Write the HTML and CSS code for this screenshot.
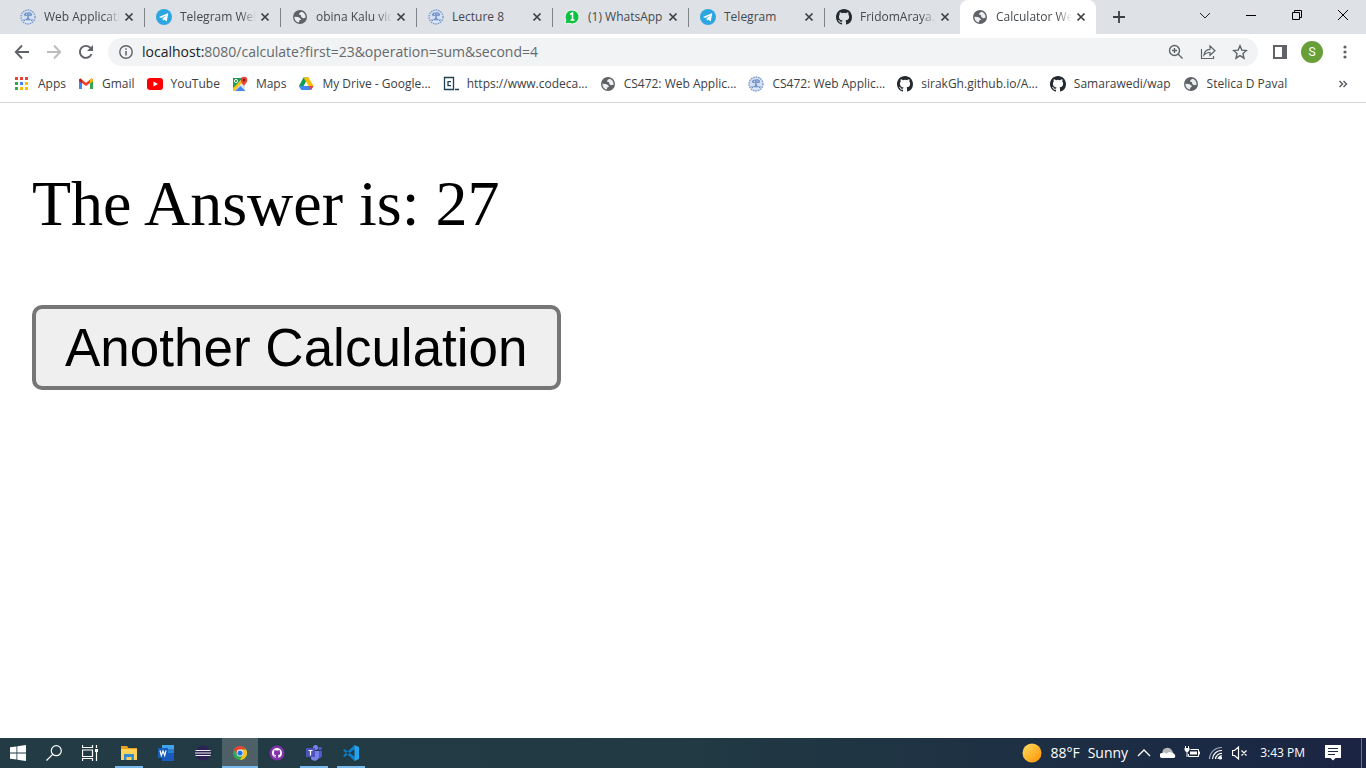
FILE: index.html
```html
<!DOCTYPE html>
<html lang="en">
<head>
<meta charset="utf-8">
<title>Calculator Web</title>
<link rel="stylesheet" href="styles.css">
</head>
<body>
<svg class="defs" aria-hidden="true">
  <symbol id="globe" viewBox="0 0 16 16"><circle cx="8" cy="8" r="7" fill="#5f6368"/><path d="M9.500 2.800L7.500 4 7 5.500l2 .8.3 1.700 1.700 1.200 2.600-.4C13.700 5.500 12 3.500 9.500 2.800zM2.400 7.800l3.600.2 2.200 1.200.8 1.600-1.700.8-.5 2C4.300 13.200 2.300 10.800 2.400 7.800z" fill="#eceef0"/></symbol>
  <symbol id="seal" viewBox="0 0 16 16"><circle cx="8" cy="8" r="7.300" fill="#d3dff0"/><circle cx="8" cy="8" r="7" fill="none" stroke="#7897c8" stroke-width="1.300" stroke-dasharray="1.500 1"/><path d="M4 6.500C3.500 4 6 3 8 3.500c2-.7 4.500.5 4 3l-2 .8-1.300-.8.3 3 2 .8-1 .9H6l-1-.9 2-.8.300-3-1.300.8z" fill="#7595c9"/><path d="M6 5l1 .8M9 4.500l1 1M5 12.500h1.500m1 .7h1m1-.7H11M2.800 8.500l1 1m8.600-1l1 1" stroke="#f1f5fa" stroke-width=".9"/><path d="M3.500 10.500l1.500 1.300m6 0l1.500-1.300" stroke="#6687bd" stroke-width="1.100"/></symbol>
  <symbol id="telegram" viewBox="0 0 16 16"><circle cx="8" cy="8" r="8" fill="#2ca5e0"/><path d="M3 8l9.300-4-1.600 8.500-2.500-1.900-1.200 1.200-.4-2.200 3.800-3.500-5 3z" fill="#fff"/></symbol>
  <symbol id="github" viewBox="0 0 16 16"><path fill="currentColor" d="M8 0C3.580 0 0 3.580 0 8c0 3.540 2.290 6.530 5.470 7.590.4.070.55-.17.55-.38v-1.490c-2.010.37-2.530-.49-2.690-.94-.09-.23-.48-.94-.82-1.130-.28-.15-.68-.52-.01-.53.63-.01 1.080.58 1.230.82.72 1.210 1.870.87 2.330.66.070-.52.280-.87.510-1.070-1.780-.2-3.640-.89-3.640-3.950 0-.87.310-1.590.82-2.150-.08-.2-.36-1.020.08-2.120 0 0 .67-.21 2.200.82a7.600 7.600 0 0 1 4 0c1.530-1.040 2.200-.82 2.200-.82.44 1.100.16 1.920.08 2.120.51.560.82 1.270.82 2.150 0 3.070-1.870 3.750-3.650 3.950.29.250.54.730.54 1.480v2.200c0 .21.150.46.550.38A8 8 0 0 0 16 8c0-4.420-3.580-8-8-8z"/></symbol>
  <symbol id="close" viewBox="0 0 10 10"><path d="M1.500 1.500l7 7m0-7l-7 7" stroke="#3c4043" stroke-width="1.700"/></symbol>
</svg>
<div class="window">
  <header class="browser">
    <div class="tabstrip">
      <div class="tabs">
        <div class="tab"><svg class="icon"><use href="#seal"/></svg><span class="tab-title fade">Web Application</span><button class="tab-close" aria-label="Close tab"><svg><use href="#close"/></svg></button></div>
        <div class="tab"><svg class="icon"><use href="#telegram"/></svg><span class="tab-title fade">Telegram Web</span><button class="tab-close" aria-label="Close tab"><svg><use href="#close"/></svg></button></div>
        <div class="tab"><svg class="icon"><use href="#globe"/></svg><span class="tab-title fade">obina Kalu video</span><button class="tab-close" aria-label="Close tab"><svg><use href="#close"/></svg></button></div>
        <div class="tab"><svg class="icon"><use href="#seal"/></svg><span class="tab-title">Lecture 8</span><button class="tab-close" aria-label="Close tab"><svg><use href="#close"/></svg></button></div>
        <div class="tab"><svg class="icon" viewBox="0 0 16 16"><path d="M8 1a7 7 0 1 1-3 13.300L1 15l.9-3.700A7 7 0 0 1 8 1z" fill="#0dc143" stroke="#f2fbf4"/><path d="M6.200 5.500L8.500 4v7M6.500 11h4" fill="none" stroke="#fff" stroke-width="1.500"/></svg><span class="tab-title">(1) WhatsApp</span><button class="tab-close" aria-label="Close tab"><svg><use href="#close"/></svg></button></div>
        <div class="tab"><svg class="icon"><use href="#telegram"/></svg><span class="tab-title">Telegram</span><button class="tab-close" aria-label="Close tab"><svg><use href="#close"/></svg></button></div>
        <div class="tab last"><svg class="icon"><use href="#github"/></svg><span class="tab-title fade">FridomAraya.github</span><button class="tab-close" aria-label="Close tab"><svg><use href="#close"/></svg></button></div>
        <div class="tab active"><svg class="icon"><use href="#globe"/></svg><span class="tab-title fade">Calculator Web</span><button class="tab-close" aria-label="Close tab"><svg><use href="#close"/></svg></button></div>
      </div>
      <button class="new-tab" aria-label="New tab"><svg viewBox="0 0 12 12"><path d="M6 0v12M0 6h12" stroke="#3c4043" stroke-width="1.800"/></svg></button>
      <div class="caption">
        <button aria-label="Search tabs"><svg viewBox="0 0 12 12"><path d="M1 4l5 5 5-5" fill="none" stroke="#222"/></svg></button>
        <button aria-label="Minimize"><svg viewBox="0 0 12 12"><path d="M1 6.500h10" stroke="#000"/></svg></button>
        <button aria-label="Restore"><svg viewBox="0 0 12 12"><path d="M1.500 3.500h7v7h-7zM3.500 3.500v-2h7v7h-2" fill="none" stroke="#000"/></svg></button>
        <button aria-label="Close"><svg viewBox="0 0 12 12"><path d="M1 1l10 10m0-10L1 11" stroke="#000"/></svg></button>
      </div>
    </div>
    <div class="toolbar">
      <button class="nav" aria-label="Back"><svg viewBox="0 0 16 16"><path d="M15 8H2m6-6.500L1.800 8 8 14.500" fill="none" stroke="#5f6368" stroke-width="1.900"/></svg></button>
      <button class="nav" aria-label="Forward"><svg viewBox="0 0 16 16"><path d="M1 8h13M8 1.500L14.200 8 8 14.500" fill="none" stroke="#babcbe" stroke-width="1.900"/></svg></button>
      <button class="nav" aria-label="Reload"><svg viewBox="0 0 16 16"><path d="M13.500 10A6 6 0 1 1 12.300 3.800L14 5.500" fill="none" stroke="#5f6368" stroke-width="1.900"/><path d="M15 1v6H9z" fill="#5f6368"/></svg></button>
      <div class="omnibox">
        <svg class="small" viewBox="0 0 14 14"><circle cx="7" cy="7" r="6.200" fill="none" stroke="#5f6368" stroke-width="1.400"/><path d="M7 6v4.500M7 3.300v1.500" stroke="#5f6368" stroke-width="1.500"/></svg>
        <div class="url"><b>localhost:</b>8080/calculate?first=23&amp;operation=sum&amp;second=4</div>
        <button aria-label="Zoom"><svg viewBox="0 0 16 16"><circle cx="6.500" cy="6.500" r="5" fill="none" stroke="#5f6368" stroke-width="1.400"/><path d="M10 10l4.500 4.500M4 6.500h5M6.500 4v5" stroke="#5f6368" stroke-width="1.400"/></svg></button>
        <button aria-label="Share"><svg viewBox="0 0 16 16"><path d="M1.500 5v9.500h12V12M4 11c.4-4 2.500-5.500 6-5.700V2l5 4.800-5 4.500V8.500C7.500 8.500 5.500 9 4 11z" fill="none" stroke="#5f6368" stroke-width="1.200"/></svg></button>
        <button aria-label="Bookmark"><svg viewBox="0 0 16 16"><path d="M8 1.800l1.800 4.300 4.700.4L11 9.600l1 4.600-4-2.500-4 2.500 1-4.600-3.500-3.100 4.700-.4z" fill="none" stroke="#5f6368" stroke-width="1.400"/></svg></button>
      </div>
      <button class="tool" aria-label="Side panel"><svg class="small" viewBox="0 0 14 14"><path d="M1 1h12v12H1z" fill="none" stroke="#5f6368" stroke-width="2"/><path d="M9 1h4v12H9z" fill="#5f6368"/></svg></button>
      <button class="avatar" aria-label="Profile">S</button>
      <button class="tool" aria-label="Menu"><svg viewBox="0 0 16 16" fill="#5f6368"><circle cx="8" cy="3" r="1.600"/><circle cx="8" cy="8" r="1.600"/><circle cx="8" cy="13" r="1.600"/></svg></button>
    </div>
    <nav class="bookmarks" aria-label="Bookmarks">
      <a href="#apps"><svg class="icon" viewBox="0 0 16 16"><path d="M1 1h3v3H1zM6 1h3v3H6zM11 1h3v3h-3z" fill="#ea4335"/><path d="M1 6h3v3H1zM1 11h3v3H1z" fill="#34a853"/><path d="M6 6h3v3H6z" fill="#4285f4"/><path d="M11 6h3v3h-3zM6 11h3v3H6zM11 11h3v3h-3z" fill="#fbbc04"/></svg>Apps</a>
      <a href="#gmail"><svg class="icon" viewBox="0 0 16 16"><path d="M1 4v9h3V6z" fill="#4285f4"/><path d="M15 4v9h-3V6z" fill="#34a853"/><path d="M1 3.500l1.500-1L8 6.700l5.500-4.200 1.500 1V5L8 10 1 5z" fill="#ea4335"/><path d="M12 4l1.500-1.500 1.500 1V5l-3 2.500z" fill="#fbbc04"/><path d="M1 5V3.500l1.500-1L4 4v3.500z" fill="#c5221f"/></svg>Gmail</a>
      <a href="#youtube"><svg class="icon" viewBox="0 0 16 16"><rect y="2" width="16" height="12" rx="3" fill="#f00"/><path d="M6.500 5.500v5L11 8z" fill="#fff"/></svg>YouTube</a>
      <a href="#maps"><svg class="icon" viewBox="0 0 16 16"><path d="M1 2h9l-4 6-5 5z" fill="#1e9b52"/><path d="M1 14L13 4v11H1z" fill="#dfe4e8"/><path d="M3 15l5.500-5 5 5z" fill="#4285f4"/><path d="M1 12l8-8 1.500 2L2.500 15H1z" fill="#fbc116"/><circle cx="4" cy="5" r="1.600" fill="none" stroke="#fff"/><path d="M12 10.500c0-2-3.300-3.300-3.300-6.500a3.300 3.300 0 0 1 6.600 0c0 3.200-3.300 4.500-3.300 6.500z" fill="#ea4335"/><circle cx="12" cy="4" r="1.200" fill="#811411"/></svg>Maps</a>
      <a href="#drive"><svg class="icon" viewBox="0 0 16 16"><path d="M5.500 1.500h5L3.500 14 1 10z" fill="#0f9d58"/><path d="M5.500 1.500h5L15.500 10h-5z" fill="#fbbc04"/><path d="M1 10h14.500L13 14H3.500z" fill="#4285f4"/><path d="M10.500 10h5L13 14z" fill="#ea4335"/><path d="M8 6l2.300 4H5.700z" fill="#fff"/></svg>My Drive - Google...</a>
      <a href="#codecademy"><svg class="icon" viewBox="0 0 16 16"><path d="M1.500 1.500h9v12h-9zM12 13.500h4" fill="none" stroke="#204056" stroke-width="1.300"/><path d="M8 5.700H5v4h3" fill="none" stroke="#204056" stroke-width="1.300"/></svg>https://www.codeca...</a>
      <a href="#cs472"><svg class="icon"><use href="#globe"/></svg>CS472: Web Applic...</a>
      <a href="#cs472-2"><svg class="icon"><use href="#seal"/></svg>CS472: Web Applic...</a>
      <a href="#sirak"><svg class="icon"><use href="#github"/></svg>sirakGh.github.io/A...</a>
      <a href="#samarawedi"><svg class="icon"><use href="#github"/></svg>Samarawedi/wap</a>
      <a href="#stelica"><svg class="icon"><use href="#globe"/></svg>Stelica D Paval</a>
      <button class="more" aria-label="More bookmarks"><svg viewBox="0 0 10 10"><path d="M1.500 2l3 3-3 3M5.500 2l3 3-3 3" fill="none" stroke="#5f6368" stroke-width="1.500"/></svg></button>
    </nav>
  </header>
  <main class="page">
    <p class="answer">The Answer is: 27</p>
    <button class="another">Another Calculation</button>
  </main>
  <footer class="taskbar">
    <div class="apps">
      <button aria-label="Start"><svg viewBox="0 0 16 16" fill="#fff"><path d="M0 2.300L6.500 1.400v6.200H0zM7.300 1.300L16 0v7.600H7.300zM0 8.400h6.500v6.200L0 13.700zM7.300 8.400H16V16l-8.700-1.300z"/></svg></button>
      <button aria-label="Search"><svg viewBox="0 0 16 16" fill="none" stroke="#fff" stroke-width="1.200"><circle cx="10.300" cy="5.700" r="5"/><path d="M6.700 9.300L.5 15.500"/></svg></button>
      <button aria-label="Task view"><svg viewBox="0 0 16 16" fill="none" stroke="#fff" stroke-width="1.200"><path d="M.5 0v2.500h10V0M.5 5h10v6.500H.5zM.5 16v-2.500h10V16M14.500 0v3m0 4v9"/><path d="M13 4h3v3h-3z" fill="#fff" stroke="none"/></svg></button>
      <button class="pinned open" aria-label="File Explorer"><svg viewBox="0 0 16 16"><path d="M0 1h6l1.500 2H16v12H0z" fill="#e8a31b"/><path d="M0 4h16v11H0z" fill="#ffd35b"/><path d="M3 9h10v6h-2.500v-3h-5v3H3z" fill="#338cd2"/></svg></button>
      <button class="pinned" aria-label="Word"><svg viewBox="0 0 16 16"><path d="M4 0h12v16H4z" fill="#185abd"/><path d="M4 0h12v4H4z" fill="#41a5ee"/><path d="M4 4h12v4H4z" fill="#2b7cd3"/><path d="M0 3h10v10H0z" fill="#175cba"/><path d="M2 5.500l1.300 5L5 6l1.700 4.500 1.300-5" fill="none" stroke="#fff" stroke-width="1.200"/></svg></button>
      <button class="pinned" aria-label="Eclipse"><svg viewBox="0 0 16 16"><circle cx="8" cy="8" r="7.500" fill="#2c2255"/><path d="M.5 5.500h15M0 8h16M.5 10.500h15" stroke="#eee" stroke-width="1.200"/></svg></button>
      <button class="pinned open current" aria-label="Chrome"><svg viewBox="0 0 16 16"><circle cx="8" cy="8" r="7" fill="#34a853"/><path d="M1.900 4.500A7 7 0 0 1 14.100 4.500H8A3.500 3.500 0 0 0 5 9.700z" fill="#ea4335"/><path d="M14.100 4.500A7 7 0 0 1 8 15l3-5.300A3.500 3.500 0 0 0 8 4.500z" fill="#fbc116"/><circle cx="8" cy="8" r="3.400" fill="#fff"/><circle cx="8" cy="8" r="2.600" fill="#1a73e8"/></svg></button>
      <button class="pinned" aria-label="GitHub Desktop"><svg viewBox="0 0 16 16"><circle cx="8" cy="8" r="7.500" fill="#8134a8"/><g class="mark" transform="translate(3 3) scale(.625)"><use href="#github" width="16" height="16"/></g></svg></button>
      <button class="pinned open" aria-label="Teams"><svg viewBox="0 0 16 16"><circle cx="9.500" cy="2.500" r="2.500" fill="#7b83eb"/><circle cx="14" cy="3.500" r="1.800" fill="#5059c9"/><path d="M10 6h6v5a3 3 0 0 1-4 2z" fill="#5059c9"/><path d="M5 6h8v5a4.500 4.500 0 0 1-8 3z" fill="#7b83eb"/><path d="M0 3h9v9H0z" fill="#4b53bc"/><path d="M2.500 5.500h4M4.500 5.500v5" stroke="#fff" stroke-width="1.200"/></svg></button>
      <button class="pinned open" aria-label="Visual Studio Code"><svg viewBox="0 0 16 16"><path d="M12 4L1.500 12 0 10.700 11.500 0zM12 12L1.500 4 0 5.300 11.500 16z" fill="#0b7fcb"/><path d="M11.500 0L16 2v12l-4.500 2z" fill="#24a3ee"/></svg></button>
    </div>
    <div class="tray">
      <button class="weather"><svg class="sun" viewBox="0 0 20 20"><defs><linearGradient id="sun" x1="0" y1="0" x2="1" y2="1"><stop stop-color="#ffdf63"/><stop offset="1" stop-color="#ff9000"/></linearGradient></defs><circle cx="10" cy="10" r="9.500" fill="url(#sun)"/></svg><span>88°F</span><span>Sunny</span></button>
      <svg class="sys" viewBox="0 0 16 16"><path d="M2 11l6-6 6 6" fill="none" stroke="#fff" stroke-width="1.300"/></svg>
      <svg class="sys" viewBox="0 0 16 16"><path d="M2.500 8A5 4.500 0 0 1 12 5.500l2 4H3z" fill="#b5b8bd"/><path d="M2.500 13a2.500 2.500 0 0 1-.5-5c2-1 3.500-.5 4.500 1 1-1.500 4-3 5.500-1 3 0 4.500 4 2 5z" fill="#fff"/></svg>
      <svg class="sys" viewBox="0 0 16 16"><path d="M6.500 4.500h8v7H4.500V9M15.500 6.500v3" fill="none" stroke="#fff"/><path d="M6 6.500h7v3H6z" fill="#fff"/><path d="M1.500 1v3M4.500 1v3M3 6v6" stroke="#fff"/><path d="M.5 3h5v2L4 7H2L.5 5z" fill="#fff"/></svg>
      <svg class="sys" viewBox="0 0 16 16" fill="none" stroke="#fff" stroke-width="1.200"><path d="M1.500 14A12 12 0 0 1 14 2.500" stroke="#9aa4b4"/><path d="M4.500 14A9 9 0 0 1 14 5.500M7.500 14A6 6 0 0 1 14 8.500M10 14a3.500 3.500 0 0 1 4-3"/><circle cx="12.500" cy="13" r="1" fill="#fff"/></svg>
      <svg class="sys" viewBox="0 0 16 16" fill="none" stroke="#fff" stroke-width="1.200"><path d="M.5 5.500h2l4-3.500v12l-4-3.500h-2zM9.500 5.500l5 5m0-5l-5 5"/></svg>
      <time class="clock">3:43 PM</time>
      <svg class="notice" viewBox="0 0 16 16"><path d="M0 0h16v13h-5.500L8 15.500 5.500 13H0z" fill="#fff"/><path d="M3 3.500h10M3 6.500h10M3 9.500h7" stroke="#1b2b43"/></svg>
    </div>
  </footer>
</div>
</body>
</html>
```
FILE: styles.css
```css
* { box-sizing: border-box; }
body { margin: 0; font: 12px/16px "Open Sans", "Noto Sans", sans-serif; color: #3c4043; background: #fff; }
button { margin: 0; padding: 0; border: 0; background: none; color: inherit; font: inherit; display: flex; align-items: center; justify-content: center; }
svg { display: block; flex: none; width: 16px; height: 16px; }
.defs { position: absolute; width: 0; height: 0; }
.small { width: 14px; height: 14px; }
.window { display: flex; flex-direction: column; min-height: 100vh; }
.tabstrip { display: flex; height: 34px; background: #dee1e6; }
.tabs { display: flex; flex: 0 1 1088px; min-width: 0; margin-left: 8px; }
.tab { display: flex; align-items: center; flex: 1 1 0; min-width: 0; padding: 0 10px 0 12px; position: relative; color: #45494d; }
.tab:not(.last):not(.active)::after { content: ""; position: absolute; right: -1px; top: 8px; width: 1px; height: 19px; background: #808387; }
.tab-title { flex: 1; min-width: 0; margin: 0 4px 0 8px; white-space: nowrap; }
.fade { overflow: hidden; -webkit-mask-image: linear-gradient(90deg, #000 80%, transparent); mask-image: linear-gradient(90deg, #000 80%, transparent); }
.tab-close svg { width: 10px; height: 10px; }
.tab .icon, .bookmarks .icon { color: #24292e; }
.active { background: #fff; border-radius: 8px 8px 0 0; }
.new-tab { width: 46px; }
.new-tab svg { width: 12px; height: 12px; }
.caption { display: flex; margin-left: auto; }
.caption button { width: 46px; height: 29px; }
.caption svg { width: 12px; height: 12px; }
.toolbar { display: flex; align-items: center; height: 36px; padding: 0 7px 0 6px; }
.nav { width: 32px; height: 32px; }
.omnibox { display: flex; align-items: center; flex: 1; height: 28px; margin-left: 6px; padding: 0 10px 0 11px; border-radius: 14px; background: #f1f3f4; }
.omnibox button { width: 16px; margin-left: 16px; }
.url { flex: 1; margin-left: 9px; font-size: 14px; line-height: 20px; color: #66696d; white-space: nowrap; }
.url b { font-weight: 400; color: #202124; }
.tool { width: 28px; height: 28px; }
.omnibox + .tool { margin: 0 7px 0 8px; }
.avatar { width: 22px; height: 22px; margin-right: 8px; border-radius: 11px; background: #689f38; color: #fff; font-family: Roboto, sans-serif; }
.bookmarks { display: flex; align-items: center; height: 33px; padding: 0 18px 4px 14px; gap: 12px; border-bottom: 1px solid #d5d7d9; }
.bookmarks a { display: flex; align-items: center; gap: 8px; color: inherit; text-decoration: none; white-space: nowrap; }
.more { margin-left: auto; }
.more svg { width: 10px; height: 10px; }
.page { flex: 1; padding: 64px 32px; color: #000; }
.answer { margin: 0 0 64px; font: 64px/74px "Liberation Serif", serif; }
.another { height: 85px; padding: 0 29px; border: 4px solid #767676; border-radius: 10px; background: #efefef; color: #000; font: 53px/61px "Liberation Sans", sans-serif; white-space: nowrap; }
.taskbar { display: flex; justify-content: space-between; height: 30px; background: linear-gradient(90deg, #223b44, #213a43 50%, #1b2a44 88%, #1b2443); color: #fff; }
.apps { display: flex; }
.apps button { width: 36px; border: solid transparent; border-width: 2px 0; }
.apps .pinned { margin-right: 1px; }
.apps button:nth-child(3) { margin-right: 3px; }
.apps .open { width: 28px; margin: 0 5px 0 4px; border-bottom-color: #76b9ed; }
.apps .current { width: 36px; margin: 0 1px 0 0; background: #4d6068; }
.mark { color: #fff; }
.tray { display: flex; align-items: center; padding-right: 20px; border-right: 1px solid #687184; margin-right: 4px; }
.weather { gap: 8px; margin-right: 8px; font-size: 14px; }
.sun { width: 20px; height: 20px; }
.sys { margin-right: 8px; }
.clock { margin: 0 20px 0 4px; }
```
